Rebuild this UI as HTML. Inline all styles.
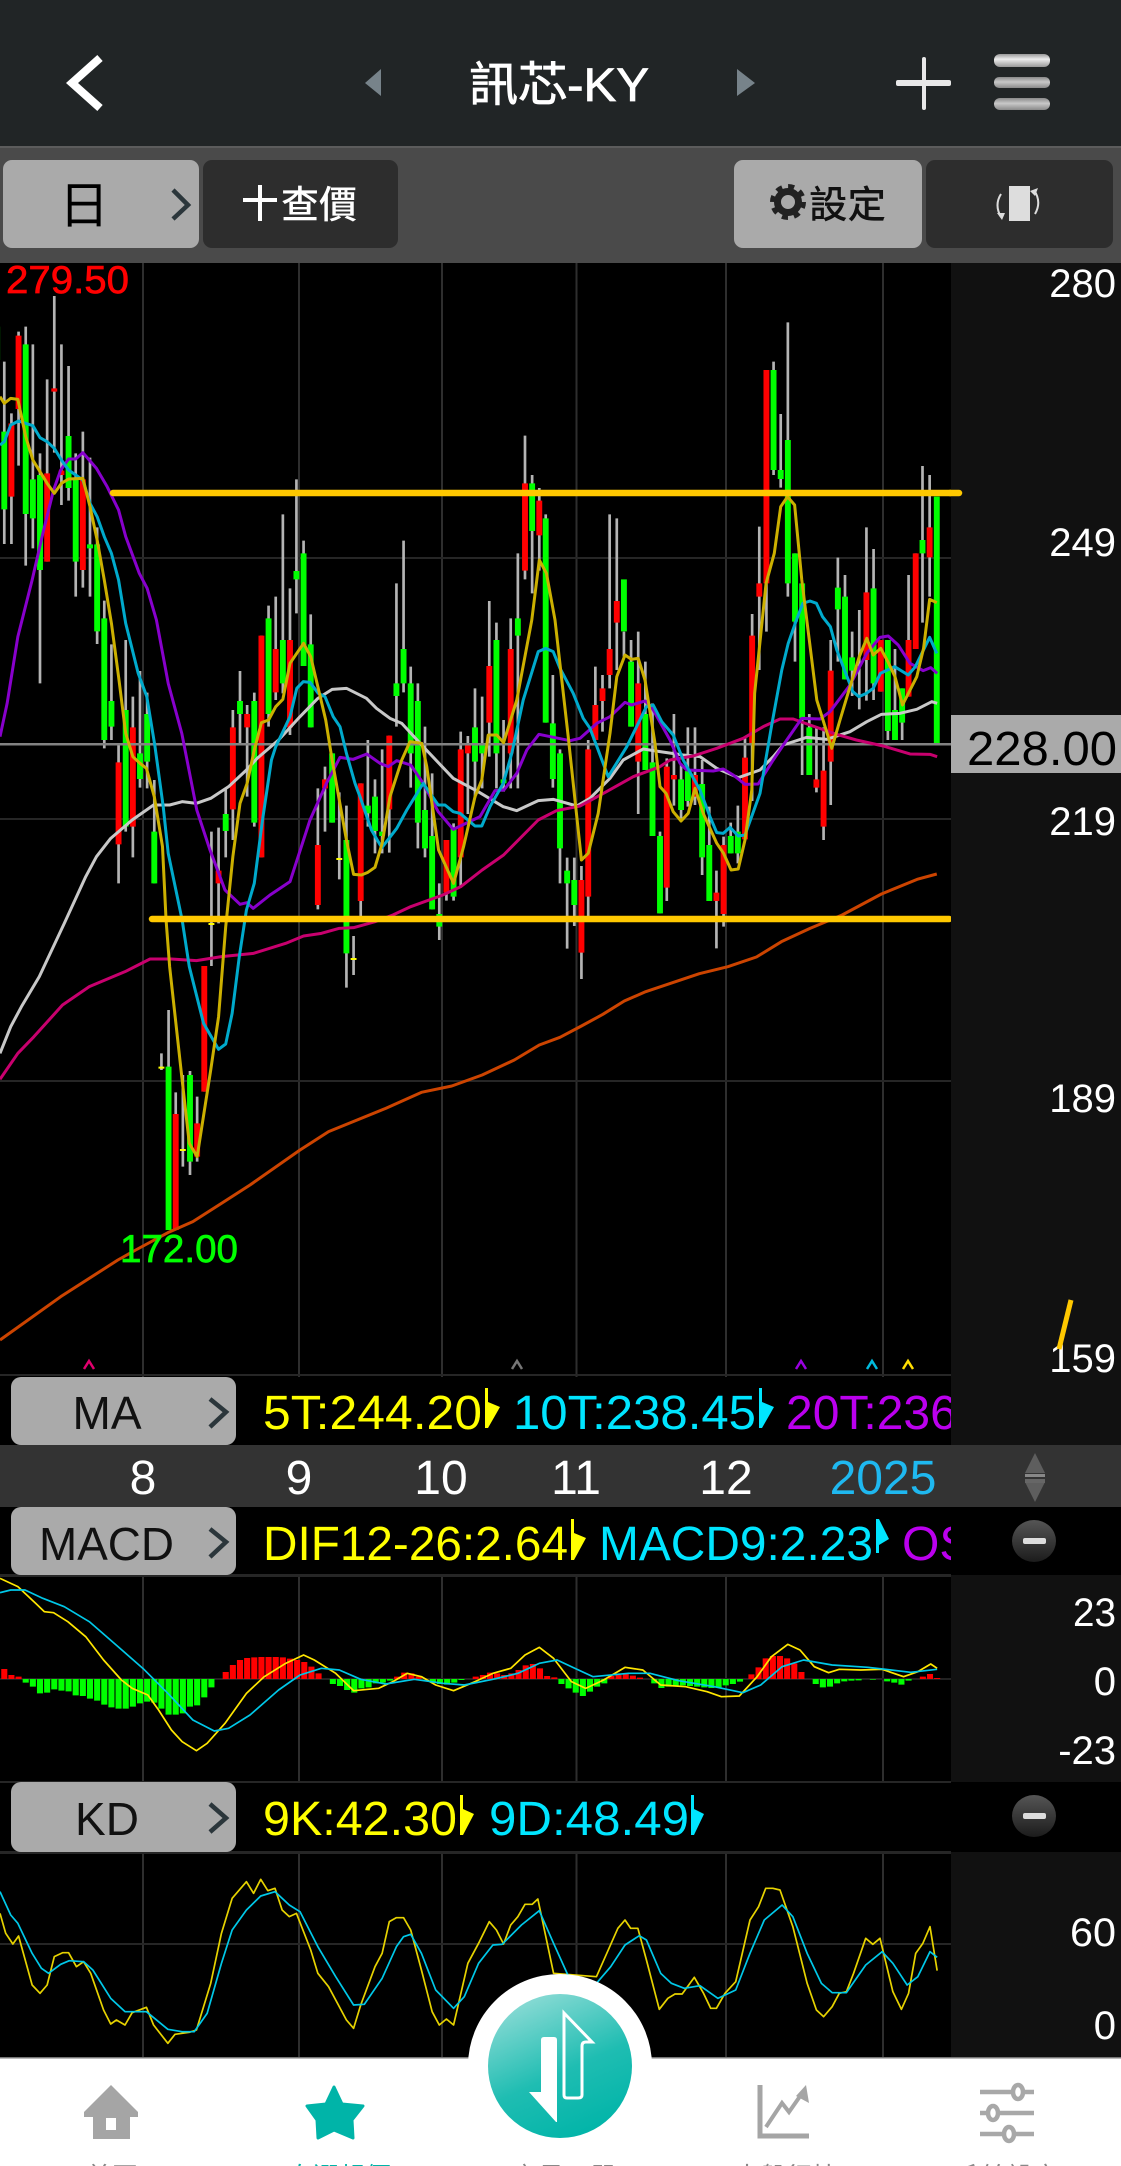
<!DOCTYPE html>
<html lang="zh-Hant"><head><meta charset="utf-8"><title>訊芯-KY</title>
<style>html,body{margin:0;padding:0;background:#000;width:1121px;height:2166px;overflow:hidden}svg{display:block}
text{font-family:"Liberation Sans","Noto Sans CJK TC",sans-serif}
.ax{fill:#fff;font-size:40px;text-anchor:end}
.r{font-size:48px}
.btn{fill:#111;font-size:46px;text-anchor:middle}
.d{fill:#fff;font-size:48px;text-anchor:middle}
.m polyline{fill:none;stroke-width:3;stroke-linejoin:round;vector-effect:non-scaling-stroke}
.t polyline{fill:none;stroke-width:1.7;stroke-linejoin:round;vector-effect:non-scaling-stroke}
</style></head><body>
<svg xmlns="http://www.w3.org/2000/svg" width="1121" height="2166" viewBox="0 0 1121 2166">
<defs>
<clipPath id="c1"><rect x="0" y="263" width="951" height="1114"/></clipPath>
<clipPath id="c2"><rect x="0" y="1370" width="951" height="220"/></clipPath>
<linearGradient id="teal" x1="0.25" y1="0" x2="0.7" y2="1"><stop offset="0" stop-color="#8fdcd6"/><stop offset=".55" stop-color="#1fbdb2"/><stop offset="1" stop-color="#00b4a8"/></linearGradient>
<linearGradient id="pill" x1="0" y1="0" x2="0" y2="1"><stop offset="0" stop-color="#999"/><stop offset=".4" stop-color="#ececec"/><stop offset="1" stop-color="#999"/></linearGradient>
<linearGradient id="pill2" x1="0" y1="0" x2="0" y2="1"><stop offset="0" stop-color="#8a8a8a"/><stop offset=".45" stop-color="#c8c8c8"/><stop offset="1" stop-color="#8a8a8a"/></linearGradient>
<linearGradient id="minus" x1="0" y1="0" x2="0" y2="1"><stop offset="0" stop-color="#555"/><stop offset="1" stop-color="#1c1c1c"/></linearGradient>
</defs>
<rect width="1121" height="2166" fill="#000"/>
<!-- header -->
<rect width="1121" height="146" fill="#212526"/>
<polyline points="100,58 72,83 100,108" fill="none" stroke="#fff" stroke-width="8"/>
<polygon points="381,69 381,96 365,83" fill="#77838a"/>
<polygon points="737,69 737,96 755,83" fill="#77838a"/>
<text x="469" y="101" font-size="47" stroke="#fff" stroke-width=".8" fill="#fff" textLength="180" lengthAdjust="spacingAndGlyphs">訊芯-KY</text>
<rect x="922" y="57" width="4" height="53" rx="2" fill="#e8e8e8"/><rect x="896" y="80" width="55" height="6" rx="2" fill="#e8e8e8"/>
<rect x="994" y="54" width="56" height="13" rx="6" fill="url(#pill)"/><rect x="994" y="77" width="56" height="11" rx="5" fill="url(#pill2)"/><rect x="994" y="98" width="56" height="12" rx="6" fill="url(#pill2)"/>
<!-- toolbar -->
<rect y="146" width="1121" height="117" fill="#4a4a4a"/><rect y="146" width="1121" height="2" fill="#5c5c5c"/>
<rect x="3" y="160" width="196" height="88" rx="9" fill="#aaa"/>
<text x="84" y="223" font-size="50" text-anchor="middle" fill="#000">日</text>
<polyline points="173,190 188,205 173,219" fill="none" stroke="#2b363b" stroke-width="4.5"/>
<rect x="203" y="160" width="195" height="88" rx="9" fill="#2d2d2d"/>
<rect x="258" y="185" width="4" height="36" fill="#fff"/><rect x="243" y="198" width="34" height="4" fill="#fff"/>
<text x="281" y="218" font-size="38" font-weight="500" fill="#fff" textLength="76" lengthAdjust="spacingAndGlyphs">查價</text>
<rect x="734" y="160" width="188" height="88" rx="9" fill="#aaa"/>
<circle cx="788" cy="202" r="15" fill="none" stroke="#222" stroke-width="6" stroke-dasharray="5.9 5.88"/>
<circle cx="788" cy="202" r="10.5" fill="none" stroke="#222" stroke-width="7"/>
<text x="809" y="218" font-size="38" font-weight="500" fill="#111" textLength="77" lengthAdjust="spacingAndGlyphs">設定</text>
<rect x="926" y="160" width="187" height="88" rx="9" fill="#2d2d2d"/>
<rect x="1009" y="186" width="21" height="35" fill="#ddd"/>
<path d="M1001 194Q994 205 1001 217M1034 190Q1042 202 1035 214" fill="none" stroke="#ddd" stroke-width="2"/>
<polygon points="997,213 1005,213 1002,220" fill="#ddd"/><polygon points="1030,191 1038,188 1035,196" fill="#ddd"/>
<!-- axis backgrounds -->
<rect x="951" y="263" width="170" height="1182" fill="#111"/>
<rect x="951" y="1575" width="170" height="207" fill="#111"/>
<rect x="951" y="1852" width="170" height="206" fill="#111"/>
<!-- grids -->
<g fill="#2e2e2e">
<rect x="142" y="263" width="2" height="1114"/><rect x="298" y="263" width="2" height="1114"/><rect x="441" y="263" width="2" height="1114"/><rect x="575.500" y="263" width="2" height="1114"/><rect x="725" y="263" width="2" height="1114"/><rect x="882" y="263" width="2" height="1114"/>
<rect x="142" y="1575" width="2" height="207"/><rect x="298" y="1575" width="2" height="207"/><rect x="441" y="1575" width="2" height="207"/><rect x="575.500" y="1575" width="2" height="207"/><rect x="725" y="1575" width="2" height="207"/><rect x="882" y="1575" width="2" height="207"/>
<rect x="142" y="1852" width="2" height="206"/><rect x="298" y="1852" width="2" height="206"/><rect x="441" y="1852" width="2" height="206"/><rect x="575.500" y="1852" width="2" height="206"/><rect x="725" y="1852" width="2" height="206"/><rect x="882" y="1852" width="2" height="206"/>
</g>
<g fill="#262626">
<rect y="557" width="951" height="2"/><rect y="818" width="951" height="2"/><rect y="1080" width="951" height="2"/><rect y="1374" width="951" height="2"/>
<rect y="1574" width="951" height="3"/><rect y="1781" width="951" height="2"/><rect y="1851" width="951" height="3"/><rect y="1943" width="951" height="2"/>
</g>
<!-- main chart -->
<g clip-path="url(#c1)"><g transform="translate(0,260) scale(.357143,.333333)">
<path fill="none" stroke="#b4b4b4" stroke-width="7.5" d="M12 305V852M32 460V852M52 215V617M72 200V917M92 253V865M112 580V1270M132 358V905M152 108V578M172 253V735M192 318V722M212 580V1010M232 515V983M252 593V1010M272 802V1152M292 1022V1465M312 1153V1440M332 1450V1870M352 1140V1715M372 1310V1792M392 1233V1583M412 1298V1585M432 1560V1870M452 2380V2430M472 2250V2910M492 2497V2910M512 2445V2720M532 2433V2745M552 2510V2705M572 2118V2495M592 1715V2118M612 1703V1990M632 1585V1792M652 1350V1740M672 1233V1450M692 1335V1610M712 1298V1700M732 1127V1792M752 1037V1400M772 1010V1320M792 763V1300M812 985V1425M830 658V1060M850 842V1218M870 1063V1402M890 1585V1948M910 1520V1715M930 1480V1688M950 1597V1858M970 1637V2183M990 2028V2145M1010 1570V1970M1030 1440V1700M1050 1558V1780M1070 1468V1780M1090 1427V1778M1110 970V1400M1130 842V1297M1150 1220V1583M1170 1270V1765M1190 1400V1792M1210 1540V1948M1230 1870V2040M1250 1740V1922M1270 1690V1922M1290 1415V1883M1310 1428V1662M1330 1285V1613M1350 1310V1585M1370 1023V1490M1390 1088V1585M1410 1380V1595M1430 1075V1585M1450 880V1585M1470 527V958M1490 645V1000M1510 684V932M1528 763V1388M1548 1245V1583M1568 1468V1870M1588 1793V2066M1608 1793V1998M1628 1818V2157M1647 1440V1977M1667 1220V1440M1687 1245V1415M1707 763V1285M1727 775V1230M1747 1115V1190M1767 1140V1400M1787 1115V1662M1807 1205V1530M1827 1330V1728M1848 1715V1960M1867 1495V1923M1887 1362V1637M1907 1510V1680M1926 1402V1640M1946 1402V1635M1966 1500V1845M1986 1640V1923M2006 1832V2065M2026 1730V2000M2046 1688V1780M2066 1637V1810M2086 1430V1738M2106 1062V1623M2126 800V1230M2146 330V1115M2166 305V645M2186 462V683M2206 187V1010M2226 880V1205M2246 970V1545M2266 1362V1545M2286 1402V1597M2306 1402V1740M2326 1140V1635M2346 893V1205M2366 945V1258M2386 1115V1308M2406 1050V1348M2426 802V1322M2446 867V1320M2466 1140V1295M2486 1140V1440M2506 1167V1440M2526 1285V1440M2544 945V1310M2564 880V1167M2583 618V1088M2603 645V1010"/>
<path fill="none" stroke="#f00" stroke-width="16.500" d="M32 490V710M52 227V447M132 640V905M152 385V395M172 632V645M232 658V930M332 1507V1753M372 1402V1700M492 2562V2910M552 2590V2690M572 2118V2495M612 1832V1870M652 1402V1648M692 1362V1402M732 1127V1792M772 1167V1297M812 1140V1402M890 1755V1935M910 1558V1585M1010 1570V1923M1090 1427V1648M1250 1740V1898M1290 1468V1792M1310 1455V1480M1370 1218V1388M1430 1167V1480M1470 670V932M1510 722V826M1628 1860V2078M1647 1468V1910M1667 1335V1440M1687 1285V1323M1707 1167V1245M1727 1023V1088M1787 1270V1505M1867 1520V1883M1887 1545V1558M1946 1545V1610M2006 1898V1923M2026 1755V1962M2086 1493V1738M2106 1127V1450M2126 970V1010M2146 330V970M2286 1558V1583M2306 1532V1700M2326 1232V1505M2426 997V1200M2466 1140V1295M2544 1140V1310M2564 880V1167M2603 802V892"/>
<path fill="none" stroke="#0f0" stroke-width="16.500" d="M12 515V748M72 253V762M92 658V775M112 645V930M192 528V684M212 658V905M252 853V865M272 853V1114M292 1075V1440M312 1323V1400M352 1350V1700M392 1480V1557M412 1362V1505M432 1715V1870M472 2420V2910M532 2445V2705M632 1662V1713M672 1323V1362M712 1323V1688M752 1075V1362M792 1140V1270M830 933V958M850 880V1218M870 1153V1402M930 1480V1688M970 1740V2080M1030 1637V1660M1050 1610V1713M1070 1715V1728M1110 1270V1308M1130 1167V1270M1150 1270V1480M1170 1323V1688M1190 1650V1765M1210 1728V1948M1230 1962V2000M1270 1702V1910M1330 1402V1505M1350 1455V1480M1390 1140V1480M1410 1558V1570M1450 1075V1127M1490 670V813M1528 775V1388M1548 1390V1557M1568 1480V1765M1588 1832V1870M1608 1860V1935M1747 958V1114M1767 1205V1400M1807 1362V1530M1827 1507V1728M1848 1728V1960M1907 1558V1650M1926 1533V1623M1966 1572V1792M1986 1755V1923M2046 1728V1780M2066 1715V1780M2166 330V630M2186 630V657M2206 540V970M2226 880V1085M2246 970V1375M2266 1402V1545M2346 983V1048M2366 1010V1258M2386 1192V1232M2446 985V1270M2486 1140V1413M2506 1350V1440M2526 1285V1388M2583 840V880M2623 710V1453M-8 200V300"/>
<path fill="none" stroke="#ff0" stroke-width="16.500" d="M452 2420V2426M512 2667V2673M592 1989V1995M950 1794V1800M990 2094V2100"/>
</g>
<rect y="743" width="951" height="2.500" fill="#828282"/>
<g class="m" transform="translate(0,260) scale(.357143,.333333)">
<polyline stroke="#c8c8c8" points="0,2380 30,2300 60,2240 110,2150 180,1990 240,1850 270,1790 310,1735 370,1680 430,1635 475,1635 510,1625 550,1630 590,1615 640,1580 690,1530 720,1495 780,1440 840,1370 890,1315 930,1288 970,1285 1026,1315 1054,1345 1092,1375 1125,1390 1185,1460 1269,1555 1339,1595 1409,1640 1447,1652 1507,1622 1549,1618 1615,1638 1652,1615 1708,1555 1745,1500 1801,1467 1848,1475 1913,1485 1960,1490 2007,1525 2067,1553 2128,1530 2165,1490 2193,1455 2259,1432 2315,1438 2380,1415 2427,1385 2468,1363 2520,1360 2567,1348 2609,1325 2624,1330"/>
<polyline stroke="#c8006e" points="0,2458 50,2380 95,2330 175,2235 250,2180 350,2135 420,2097 480,2097 550,2102 620,2090 710,2080 800,2050 850,2028 900,2020 950,2005 990,2003 1050,1985 1100,1965 1150,1940 1240,1905 1290,1880 1350,1830 1410,1785 1507,1680 1558,1652 1624,1638 1698,1595 1773,1550 1848,1520 1876,1500 1941,1488 2007,1465 2081,1435 2137,1400 2184,1377 2221,1377 2268,1395 2342,1423 2398,1440 2473,1458 2548,1482 2604,1483 2624,1490"/>
<polyline stroke="#cc4400" points="0,3240 170,3110 330,3000 380,2970 470,2918 540,2885 620,2830 700,2775 840,2670 920,2615 1080,2545 1180,2497 1265,2478 1350,2445 1440,2400 1510,2355 1568,2332 1628,2298 1688,2263 1748,2223 1808,2195 1958,2141 2038,2120 2118,2091 2188,2045 2268,2005 2358,1965 2468,1902 2568,1858 2623,1842"/>
<polyline stroke="#8800cc" points="0,1430 20,1330 50,1130 90,960 120,820 150,690 170,630 192,597 212,597 232,578 270,625 300,680 332,750 352,830 390,940 412,985 438,1080 471,1270 509,1420 551,1650 588,1770 630,1890 672,1933 691,1928 709,1945 756,1905 812,1865 868,1680 914,1570 952,1492 989,1498 1027,1482 1064,1510 1087,1520 1111,1502 1150,1515 1185,1570 1227,1655 1269,1708 1344,1670 1386,1592 1411,1590 1447,1540 1475,1470 1509,1423 1596,1442 1624,1435 1671,1390 1708,1370 1750,1327 1768,1335 1806,1323 1824,1340 1876,1440 1904,1510 1923,1530 1997,1533 2025,1527 2053,1545 2086,1573 2123,1572 2165,1500 2203,1440 2245,1375 2296,1377 2324,1355 2380,1275 2427,1180 2464,1132 2487,1128 2515,1155 2548,1210 2585,1232 2606,1223 2624,1240"/>
<polyline stroke="#00aacc" points="0,555 12,545 30,495 52,483 92,497 112,533 132,545 152,565 172,600 192,630 232,660 252,730 272,770 292,830 312,880 332,960 352,1090 387,1240 411,1310 434,1460 457,1640 471,1780 510,1980 530,2120 570,2290 612,2368 632,2352 650,2260 670,2090 690,1950 712,1870 735,1680 760,1500 772,1460 790,1420 812,1370 831,1285 849,1265 868,1267 891,1300 910,1310 933,1370 952,1400 970,1480 994,1570 1008,1610 1040,1710 1069,1763 1111,1705 1139,1650 1185,1570 1227,1635 1246,1635 1269,1655 1288,1660 1330,1698 1349,1698 1372,1640 1409,1570 1433,1480 1465,1320 1507,1175 1528,1165 1549,1175 1568,1225 1605,1300 1633,1375 1652,1405 1703,1550 1755,1460 1810,1340 1829,1335 1853,1385 1885,1425 1913,1500 1960,1590 1988,1670 2007,1718 2025,1720 2044,1702 2067,1728 2086,1725 2128,1600 2160,1400 2189,1230 2207,1150 2230,1080 2248,1030 2268,1023 2286,1030 2303,1070 2325,1100 2343,1170 2368,1240 2388,1295 2405,1310 2426,1300 2445,1285 2465,1240 2505,1220 2543,1245 2563,1220 2603,1132 2623,1180"/>
<polyline stroke="#ccb000" points="0,410 12,430 30,415 50,418 72,530 92,600 132,670 152,700 172,670 192,657 232,655 252,740 272,840 292,960 312,1090 332,1250 352,1420 372,1490 392,1510 410,1525 432,1610 455,1760 465,1980 475,2120 510,2460 530,2650 552,2690 590,2430 612,2270 632,2000 652,1790 672,1630 692,1570 712,1470 732,1388 752,1380 772,1340 792,1318 812,1210 850,1150 870,1190 890,1280 912,1380 930,1500 950,1620 970,1740 990,1843 1012,1845 1030,1837 1050,1822 1070,1750 1092,1610 1125,1500 1148,1445 1181,1450 1195,1520 1228,1770 1270,1870 1298,1760 1330,1610 1349,1560 1367,1425 1391,1425 1410,1448 1447,1320 1489,1080 1510,900 1530,940 1554,1080 1591,1430 1628,1800 1647,1780 1675,1660 1708,1420 1727,1250 1750,1185 1768,1198 1787,1195 1806,1260 1834,1450 1848,1580 1865,1600 1885,1655 1907,1683 1927,1660 1946,1585 1969,1660 2007,1750 2026,1780 2047,1830 2067,1827 2086,1740 2105,1590 2113,1300 2145,970 2168,880 2186,740 2205,710 2225,735 2245,960 2259,1080 2287,1320 2329,1465 2352,1380 2380,1280 2406,1190 2427,1135 2445,1185 2466,1165 2486,1205 2506,1250 2527,1335 2567,1250 2586,1165 2603,1018 2623,1028"/>
</g>
<line x1="113" y1="493" x2="957" y2="493" stroke="#ffc800" stroke-width="6.500" stroke-linecap="round"/>
<line x1="152" y1="919" x2="949" y2="919" stroke="#ffc800" stroke-width="6.500" stroke-linecap="round"/>
<g fill="none" stroke-width="2.500">
<polyline points="84,1369 89,1361 94,1369" stroke="#e0006e"/><polyline points="512,1369 517,1361 522,1369" stroke="#777"/><polyline points="796,1369 801,1361 806,1369" stroke="#9a00e0"/><polyline points="867,1369 872,1361 877,1369" stroke="#00bbdd"/><polyline points="903,1369 908,1361 913,1369" stroke="#ffdd00"/>
</g>
</g>
<line x1="950" y1="493" x2="959" y2="493" stroke="#ffc800" stroke-width="6.500" stroke-linecap="round"/>
<text x="6" y="293" font-size="39" fill="#f00" stroke="#f00" stroke-width=".7" textLength="123" lengthAdjust="spacingAndGlyphs">279.50</text>
<text x="120" y="1262" font-size="39" fill="#0f0" stroke="#0f0" stroke-width=".7" textLength="118" lengthAdjust="spacingAndGlyphs">172.00</text>
<text class="ax" x="1116" y="297">280</text><text class="ax" x="1116" y="556">249</text><text class="ax" x="1116" y="835">219</text><text class="ax" x="1116" y="1112">189</text><text class="ax" x="1116" y="1372">159</text>
<line x1="1071" y1="1300" x2="1059" y2="1349" stroke="#ffc800" stroke-width="5"/>
<rect x="951" y="715" width="170" height="58" fill="#aaa"/>
<text x="967" y="765" font-size="48" fill="#000" textLength="150" lengthAdjust="spacingAndGlyphs">228.00</text>
<!-- MA row -->
<rect x="11" y="1377" width="225" height="68" rx="10" fill="#aaa"/>
<text class="btn" x="107" y="1429">MA</text>
<polyline points="210,1399 226,1412 210,1427" fill="none" stroke="#2b363b" stroke-width="4.500"/>
<g clip-path="url(#c2)">
<text class="r" x="263" y="1429" fill="#ff0" textLength="219" lengthAdjust="spacingAndGlyphs">5T:244.20</text>
<path fill="#ff0" d="M485 1388h3v40h-3zM488 1402l12 5-12 21z"/>
<text class="r" x="513" y="1429" fill="#00e5ff" textLength="243" lengthAdjust="spacingAndGlyphs">10T:238.45</text>
<path fill="#00e5ff" d="M759 1388h3v40h-3zM762 1402l12 5-12 21z"/>
<text class="r" x="786" y="1429" fill="#bb00ee">20T:236.80</text>
</g>
<!-- date row -->
<rect y="1445" width="1121" height="62" fill="#333"/>
<text class="d" x="143" y="1494">8</text><text class="d" x="299" y="1494">9</text><text class="d" x="441" y="1494">10</text><text class="d" x="576" y="1494">11</text><text class="d" x="726" y="1494">12</text>
<text class="d" x="883" y="1494" style="fill:#1fb8f0">2025</text>
<path fill="#5e5e5e" d="M1035 1453l10 20h-20zM1035 1502l-10-20h20z"/><rect x="1025" y="1474" width="20" height="3" fill="#888"/><rect x="1025" y="1479" width="20" height="4" fill="#666"/>
<!-- MACD row -->
<rect x="11" y="1507" width="225" height="68" rx="10" fill="#aaa"/>
<text class="btn" x="106.500" y="1560" textLength="135" lengthAdjust="spacingAndGlyphs">MACD</text>
<polyline points="210,1529 226,1542 210,1557" fill="none" stroke="#2b363b" stroke-width="4.500"/>
<g clip-path="url(#c2)">
<text class="r" x="263" y="1560" fill="#ff0" textLength="305" lengthAdjust="spacingAndGlyphs">DIF12-26:2.64</text>
<path fill="#ff0" d="M571 1519h3v41h-3zM574 1533l12 5-12 22z"/>
<text class="r" x="599" y="1560" fill="#00e5ff" textLength="274" lengthAdjust="spacingAndGlyphs">MACD9:2.23</text>
<path fill="#00e5ff" d="M876 1519h3v34h-3zM879 1519l10 20-10 6z"/>
<text class="r" x="902" y="1560" fill="#bb00ee">OSC:0.41</text>
</g>
<ellipse cx="1034" cy="1541" rx="22" ry="21" fill="url(#minus)"/><rect x="1023" y="1538" width="23" height="6" rx="2" fill="#ddd"/>
<!-- MACD chart -->
<rect y="1678" width="951" height="2" fill="#222"/>
<g transform="translate(0,1560) scale(.714286,.333333)">
<path fill="none" stroke="#f00" stroke-width="8.500" d="M6 357V327M16 357V345M26 357V350M316 357V336M326 357V315M336 357V300M346 357V294M356 357V292M366 357V291M376 357V291M386 357V291M396 357V292M406 357V296M416 357V300M426 357V306M436 357V320M446 357V340M556 357V350M566 357V338M576 357V340M586 357V350M666 357V350M676 357V345M686 357V338M696 357V340M706 357V345M716 357V340M726 357V330M736 357V316M746 357V312M756 357V325M766 357V348M776 357V352M856 357V348M866 357V345M876 357V340M886 357V347M896 357V353M1052 357V343M1062 357V322M1072 357V295M1082 357V288M1092 357V288M1102 357V295M1112 357V310M1122 357V336M1292 357V350M1302 357V342M1312 357V354"/>
<path fill="none" stroke="#0f0" stroke-width="8.500" d="M36 357V368M46 357V380M56 357V400M66 357V398M76 357V388M86 357V392M96 357V394M106 357V406M116 357V408M126 357V416M136 357V422M146 357V434M156 357V442M166 357V446M176 357V446M186 357V440M196 357V430M206 357V425M216 357V428M226 357V446M236 357V464M246 357V464M256 357V460M266 357V440M276 357V436M286 357V412M296 357V382M466 357V372M476 357V378M486 357V390M496 357V398M506 357V385M516 357V382M526 357V370M536 357V368M546 357V362M606 357V368M616 357V372M626 357V374M636 357V368M646 357V360M786 357V372M796 357V385M806 357V398M816 357V408M826 357V395M836 357V380M846 357V370M916 357V370M926 357V384M936 357V380M946 357V378M956 357V376M966 357V378M976 357V380M986 357V382M996 357V384M1006 357V382M1016 357V376M1026 357V372M1036 357V365M1142 357V372M1152 357V382M1162 357V380M1172 357V370M1182 357V364M1192 357V362M1202 357V361M1222 357V359M1242 357V364M1252 357V368M1262 357V374M1272 357V362"/>
<g class="t">
<polyline stroke="#ffe600" points="0,55 25,80 50,130 62,155 75,158 95,185 120,230 145,300 170,360 185,385 207,405 222,450 240,510 255,545 275,572 290,550 315,490 345,400 370,350 400,310 425,285 440,300 470,340 495,392 530,385 550,365 570,340 590,350 610,375 635,392 665,365 690,340 715,325 735,285 755,262 775,295 800,365 820,385 845,360 875,322 900,330 925,375 960,380 990,395 1010,410 1035,408 1060,350 1080,290 1103,253 1120,270 1140,320 1160,338 1175,328 1205,330 1235,328 1265,350 1285,335 1303,312 1312,325"/>
<polyline stroke="#00c8e8" points="0,98 15,90 35,90 60,115 90,140 125,185 160,250 200,325 235,400 270,480 300,513 320,505 350,465 390,390 420,345 450,325 475,330 505,358 540,372 580,358 620,370 650,375 690,358 725,340 755,310 780,300 805,325 830,350 880,340 910,340 950,362 1000,380 1040,398 1065,375 1095,320 1125,300 1165,315 1215,322 1240,328 1275,337 1312,328"/>
</g></g>
<text class="ax" x="1116" y="1626" textLength="43" lengthAdjust="spacingAndGlyphs">23</text><text class="ax" x="1116" y="1695">0</text><text class="ax" x="1116" y="1764">-23</text>
<!-- KD row -->
<rect x="11" y="1782" width="225" height="70" rx="10" fill="#aaa"/>
<text class="btn" x="107" y="1835">KD</text>
<polyline points="210,1804 226,1818 210,1832" fill="none" stroke="#2b363b" stroke-width="4.500"/>
<text class="r" x="263" y="1835" fill="#ff0" textLength="194" lengthAdjust="spacingAndGlyphs">9K:42.30</text>
<path fill="#ff0" d="M460 1795h3v40h-3zM463 1809l11 5-11 21z"/>
<text class="r" x="489" y="1835" fill="#00e5ff" textLength="200" lengthAdjust="spacingAndGlyphs">9D:48.49</text>
<path fill="#00e5ff" d="M691 1795h3v40h-3zM694 1809l10 5-10 21z"/>
<ellipse cx="1034" cy="1816" rx="22" ry="21" fill="url(#minus)"/><rect x="1023" y="1813" width="23" height="6" rx="2" fill="#ddd"/>
<!-- KD chart -->
<g class="t" transform="translate(0,1820) scale(.714286,.333333)">
<polyline stroke="#e6d200" points="0,280 8,340 18,372 26,348 45,495 56,520 66,495 76,410 88,398 96,398 107,440 117,425 127,460 145,570 155,612 163,600 175,615 185,578 205,562 215,615 235,670 245,643 265,637 275,630 295,490 310,340 325,235 345,185 355,220 365,178 375,212 385,205 395,270 405,290 415,280 435,390 445,460 460,500 485,600 495,625 505,555 525,440 535,400 545,305 555,293 565,293 575,330 590,450 605,575 615,615 625,597 635,615 655,430 670,370 685,305 695,330 705,372 715,315 725,290 735,253 745,253 753,237 775,460 835,470 865,325 875,300 883,325 893,325 905,420 923,568 935,535 945,522 955,522 972,472 985,520 995,565 1003,565 1015,520 1030,485 1050,300 1062,260 1072,205 1082,205 1092,210 1110,320 1130,490 1143,570 1153,590 1165,560 1175,520 1185,515 1195,460 1212,355 1222,373 1232,355 1250,515 1262,568 1272,520 1282,400 1292,370 1302,320 1312,452"/>
<polyline stroke="#00c8e8" points="0,215 15,285 25,310 45,400 58,445 68,460 85,433 97,422 117,425 130,450 155,535 175,575 205,575 235,628 255,635 272,635 290,580 310,430 325,330 345,270 365,228 385,215 405,255 420,275 445,380 470,470 495,555 510,553 535,475 555,380 565,350 575,343 590,400 610,510 635,565 650,530 670,430 690,375 703,373 730,315 755,272 775,370 795,465 835,490 855,440 875,375 895,347 905,360 925,460 940,490 958,505 980,497 1005,535 1030,510 1050,400 1070,300 1095,255 1110,290 1130,400 1150,490 1165,518 1185,518 1212,435 1235,395 1250,430 1270,495 1285,470 1302,395 1312,412"/>
</g>
<text class="ax" x="1116" y="1946" textLength="46" lengthAdjust="spacingAndGlyphs">60</text><text class="ax" x="1116" y="2039">0</text>
<!-- bottom nav -->
<rect y="2058" width="1121" height="108" fill="#fff"/><rect y="2057" width="1121" height="1.500" fill="#777"/>
<circle cx="560" cy="2066" r="92" fill="#fff"/>
<circle cx="560" cy="2066" r="72" fill="url(#teal)"/>
<path fill="#fff" d="M541 2040q0-3 3-3h10q3 0 3 3v82l-1 0-27-30h12z"/>
<path fill="none" stroke="#fff" stroke-width="3" d="M564 2013L592 2042H586Q582 2042 582 2046V2095Q582 2098 578 2098H567Q564 2098 564 2095Z"/>
<path fill="#a5a5a5" d="M111 2085L138 2112V2117H130V2139H93V2117H84V2112Z"/><rect x="106" y="2118" width="10" height="12" fill="#fff"/>
<path fill="#00b4a8" stroke="#00b4a8" stroke-width="3" stroke-linejoin="round" d="M334 2087L342 2104L363 2106L352 2120L353 2138L334 2130L318 2138L317 2120L307 2106L326 2104Z"/>
<path fill="none" stroke="#a5a5a5" stroke-width="5" d="M760 2085V2136H809"/>
<path fill="none" stroke="#a5a5a5" stroke-width="4" d="M766 2127L782 2103L789 2112L803 2092"/><path fill="#a5a5a5" d="M806 2085L809 2103L796 2096Z"/>
<g fill="#fff" stroke="#a8a8a8" stroke-width="4.500">
<path d="M980 2092H1034M980 2113H1034M980 2134H1034" fill="none"/>
<ellipse cx="1018" cy="2092" rx="5" ry="7"/><ellipse cx="993" cy="2113" rx="5" ry="7"/><ellipse cx="1009" cy="2134" rx="5" ry="7"/>
</g>
<g font-size="26" text-anchor="middle" fill="#888">
<text x="112" y="2186">首頁</text><text x="339" y="2186" fill="#00b4a8">自選報價</text><text x="564" y="2186">交易下單</text><text x="786" y="2186">大盤行情</text><text x="1007" y="2186">系統設定</text>
</g>
</svg>
</body></html>
